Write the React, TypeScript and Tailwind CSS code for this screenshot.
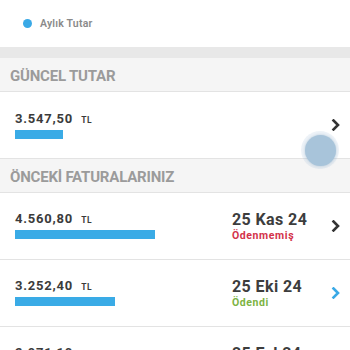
import { ReactNode } from "react";

type Bill = {
  amount: string;
  bar: number;
  date: string;
  status: string;
  paid: boolean;
};

const bills: Bill[] = [
  { amount: "4.560,80", bar: 140, date: "25 Kas 24", status: "Ödenmemiş", paid: false },
  { amount: "3.252,40", bar: 100, date: "25 Eki 24", status: "Ödendi", paid: true },
  { amount: "2.971,10", bar: 90, date: "25 Eyl 24", status: "Ödendi", paid: true },
];

function Chevron({ className }: { className?: string }) {
  return (
    <svg className={className} viewBox="0 0 10 12" fill="none" stroke="currentColor" strokeWidth="2.6" strokeLinecap="square" strokeLinejoin="miter">
      <polyline points="2.5 1.5 7 6 2.5 10.5" />
    </svg>
  );
}

function SectionHeader({ children }: { children: ReactNode }) {
  return (
    <div className="h-[34px] bg-[#f5f5f5] border-b border-[#e3e3e3] px-[10px] pt-[3px] flex items-center text-[15px] font-bold text-[#9b9b9b] tracking-[-0.2px]">
      {children}
    </div>
  );
}

function Amount({ value, bar }: { value: string; bar: number }) {
  return (
    <div className="flex flex-col">
      <div className="flex items-baseline gap-[8px] text-[#3b3b3b] font-bold leading-[16px]">
        <span className="text-[13px] tracking-[0.8px]">{value}</span>
        <span className="text-[8.5px] tracking-[0.5px]">TL</span>
      </div>
      <div className="mt-[2px] h-[9px] bg-[#3aabe6]" style={{ width: bar }} />
    </div>
  );
}

export default function App() {
  return (
    <div className="w-[350px] h-[350px] overflow-hidden bg-white relative" style={{ fontFamily: "Roboto, 'Liberation Sans', sans-serif" }}>
      <div className="h-[47px] flex items-center pl-[23px] gap-[8px]">
        <div className="w-[9px] h-[9px] rounded-full bg-[#3aa9e6]" />
        <span className="text-[10.5px] font-semibold text-[#8a8a8a] tracking-[0.2px]">Aylık Tutar</span>
      </div>
      <div className="h-[11px] bg-[#e8e8e8]" />

      <SectionHeader>GÜNCEL TUTAR</SectionHeader>
      <div className="h-[67px] border-b border-[#e3e3e3] pl-[15px] pr-[9px] flex items-start justify-between">
        <div className="pt-[19px]">
          <Amount value="3.547,50" bar={48} />
        </div>
        <Chevron className="mt-[27px] w-[10px] h-[12px] text-[#333333]" />
      </div>

      <SectionHeader>ÖNCEKİ FATURALARINIZ</SectionHeader>
      {bills.map((b) => (
        <div key={b.date} className="h-[67px] border-b border-[#e3e3e3] pl-[15px] pr-[9px] flex items-start">
          <div className="pt-[18px] flex-1">
            <Amount value={b.amount} bar={b.bar} />
          </div>
          <div className="w-[99px] pt-[18px] flex flex-col">
            <span className="text-[16px] font-bold text-[#3d3d3d] leading-[18px] tracking-[0.4px]">{b.date}</span>
            <span className={`text-[10.5px] font-bold leading-[14px] tracking-[0.6px] ${b.paid ? "text-[#7cb342]" : "text-[#d3324a]"}`}>
              {b.status}
            </span>
          </div>
          <Chevron className={`mt-[27px] w-[10px] h-[12px] ${b.paid ? "text-[#3aa9e6]" : "text-[#333333]"}`} />
        </div>
      ))}

      <div className="absolute left-[301px] top-[131px] w-[38px] h-[38px] rounded-full bg-[#a9c5dc]/20 flex items-center justify-center">
        <div className="w-[31px] h-[31px] rounded-full bg-[#a8c4da] shadow-[0_0_3px_rgba(120,160,190,0.5)]" />
      </div>
    </div>
  );
}
